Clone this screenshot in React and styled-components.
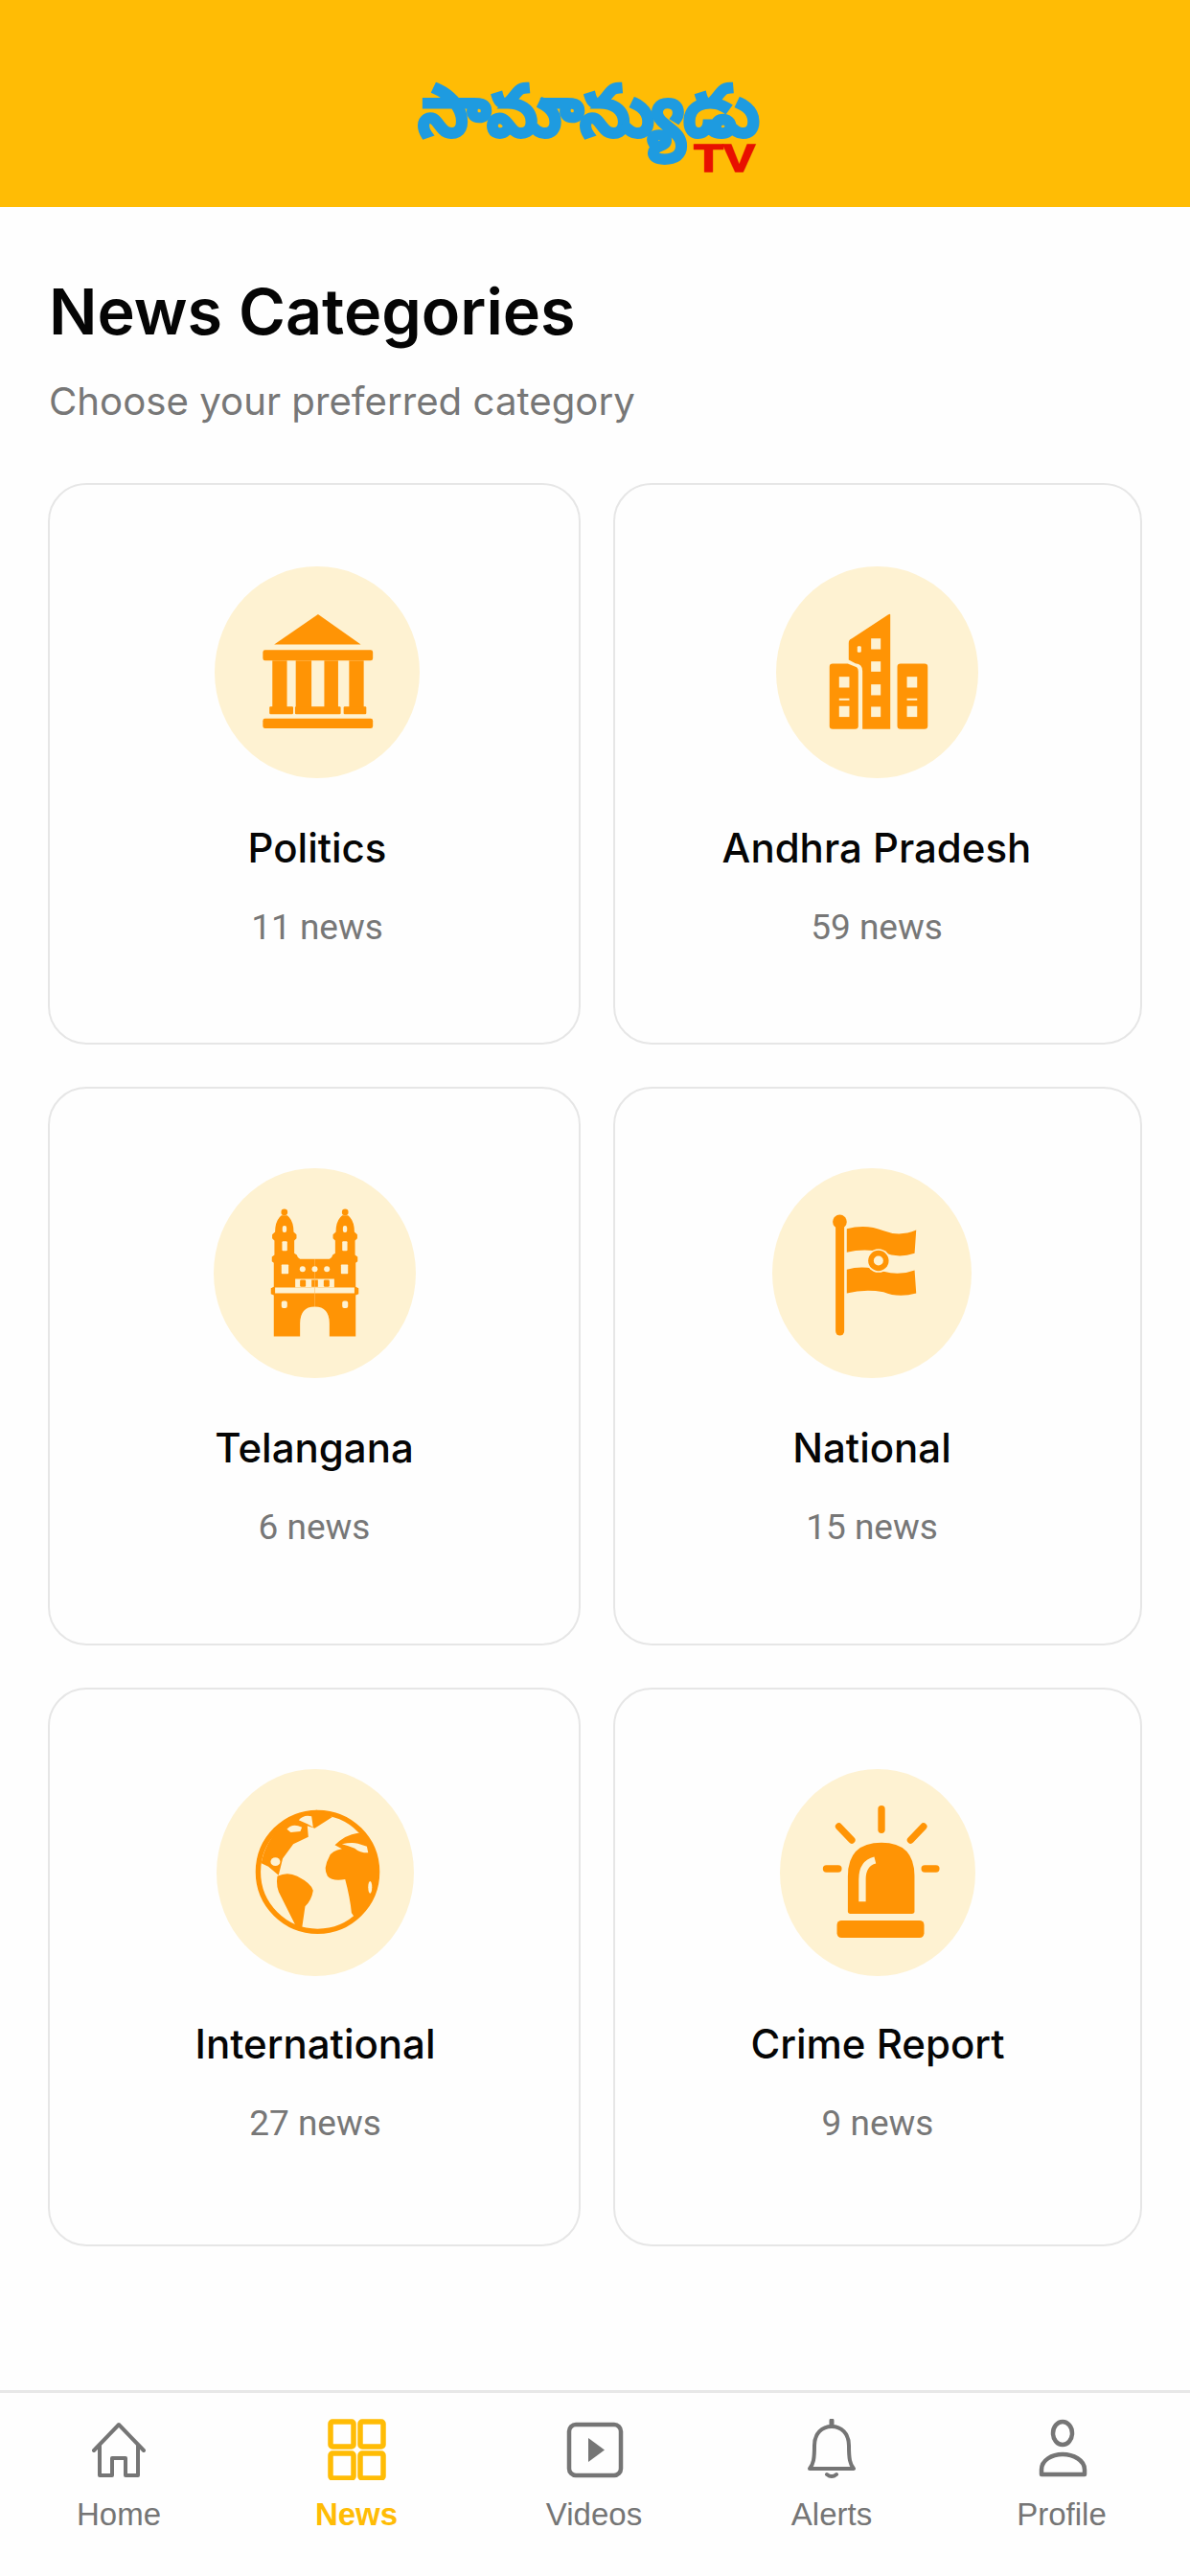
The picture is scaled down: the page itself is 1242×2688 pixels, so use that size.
import React from "react";
import styled, { createGlobalStyle } from "styled-components";

const ORANGE = "#ff9405";
const PALE = "#fef2d2";
const GREY = "#757575";

const GlobalStyle = createGlobalStyle`
  html, body {
    margin: 0;
    padding: 0;
    background: #fefefe;
  }
  * {
    box-sizing: border-box;
  }
`;

const Page = styled.div`
  width: 1242px;
  height: 2688px;
  display: flex;
  flex-direction: column;
  background: #fefefe;
  font-family: Inter, "Liberation Sans", sans-serif;
  overflow: hidden;
`;

const Header = styled.header`
  height: 216px;
  flex: none;
  display: flex;
  align-items: center;
  justify-content: center;
  background: #ffbc05;
`;

const Logo = styled.div`
  width: 354px;
  height: 102px;
  margin: 42px 14px 0 0;
  display: flex;
  flex-direction: column;
`;

const LogoWord = styled.span`
  height: 74px;
  font-family: "Noto Sans", "DejaVu Sans", sans-serif;
  font-size: 72px;
  line-height: 70px;
  font-weight: 700;
  white-space: nowrap;
  color: #1e9be0;
  -webkit-text-stroke: 4px #1e9be0;
`;

const LogoTv = styled.span`
  align-self: flex-end;
  margin-right: 3px;
  font-family: "Liberation Sans", sans-serif;
  font-size: 40px;
  line-height: 30px;
  font-weight: 700;
  color: #e81000;
  -webkit-text-stroke: 1.5px #e81000;
  transform: scaleX(1.25);
  transform-origin: right center;
`;

const Main = styled.main`
  flex: 1;
  padding: 64px 50px 0;
`;

const Title = styled.h1`
  margin: 0 0 0 1px;
  font-size: 66.5px;
  line-height: 90px;
  font-weight: 600;
  color: #050505;
`;

const Subtitle = styled.p`
  margin: 24px 0 0 1px;
  font-size: 40.2px;
  line-height: 50px;
  color: #777;
`;

const Grid = styled.div`
  margin-top: 60px;
  display: grid;
  grid-template-columns: 556px 552px;
  grid-template-rows: 586px 583px 583px;
  column-gap: 34px;
  row-gap: 44px;
`;

const Card = styled.article`
  border: 2.5px solid #e6e6e6;
  border-radius: 40px;
  padding: ${(props) => props.$top}px ${(props) => props.$right || 0}px 0 ${(props) => props.$left || 0}px;
  display: flex;
  flex-direction: column;
  align-items: center;
  background: #fefefe;
`;

const IconCircle = styled.div`
  width: ${(props) => props.$w}px;
  height: ${(props) => props.$h}px;
  border-radius: 50%;
  background: ${PALE};
  flex: none;

  svg {
    display: block;
    width: 100%;
    height: 100%;
  }
`;

const CardTitle = styled.h2`
  margin: ${(props) => props.$gap}px 0 0;
  font-size: 42px;
  line-height: 52px;
  font-weight: 500;
  color: #050505;
`;

const CardCount = styled.p`
  margin: 31px 0 0;
  font-family: Roboto, Inter, sans-serif;
  font-size: 37px;
  line-height: 52px;
  color: #777;
`;

const Nav = styled.nav`
  height: 194px;
  flex: none;
  border-top: 3px solid #e8e8e8;
  display: grid;
  grid-template-columns: 248px 248px 248px 248px 232px;
  padding-top: 27px;
  align-items: start;
`;

const NavItem = styled.div`
  display: flex;
  flex-direction: column;
  align-items: center;
  color: ${(props) => (props.$active ? "#ffbc05" : GREY)};

  svg {
    display: block;
    width: 64px;
    height: 64px;
  }
`;

const NavLabel = styled.span`
  margin-top: 16px;
  font-family: "Liberation Sans", sans-serif;
  font-size: 33px;
  line-height: 40px;
  font-weight: ${(props) => (props.$active ? 700 : 400)};
`;

const TempleIcon = () => (
  <svg viewBox="505 278 561 562" preserveAspectRatio="none">
    <g fill={ORANGE}>
      <path d="M788 405L905 485H668Z" />
      <rect x="637" y="500" width="301" height="28" rx="6" />
      <rect x="663" y="528" width="40" height="125" />
      <rect x="727" y="528" width="43" height="125" />
      <rect x="805" y="528" width="38" height="125" />
      <rect x="873" y="528" width="40" height="125" />
      <rect x="655" y="650" width="65" height="20" rx="3" />
      <rect x="725" y="650" width="125" height="20" rx="3" />
      <rect x="858" y="650" width="62" height="20" rx="3" />
      <rect x="637" y="682" width="301" height="26" rx="6" />
    </g>
  </svg>
);

const BuildingsIcon = () => (
  <svg viewBox="148 62 632 664" preserveAspectRatio="none">
    <g fill={ORANGE}>
      <path d="M325 367H372L400 378Q405 382 405 392V562Q405 572 395 572H325Q315 572 315 562V377Q315 367 325 367Z" />
      <path d="M505 213V572H418V390Q418 368 396 366L375 355V302Q375 292 385 288L498 214Q505 210 505 213Z" />
      <rect x="527" y="367" width="95" height="205" rx="10" />
    </g>
    <g fill={PALE}>
      <rect x="445" y="288" width="30" height="34" />
      <rect x="445" y="360" width="30" height="32" />
      <rect x="445" y="432" width="30" height="34" />
      <rect x="445" y="502" width="30" height="32" />
      <rect x="402" y="312" width="12" height="20" rx="4" />
      <rect x="345" y="408" width="32" height="34" />
      <rect x="345" y="476" width="32" height="6" />
      <rect x="345" y="500" width="32" height="34" />
      <rect x="557" y="408" width="32" height="34" />
      <rect x="557" y="476" width="32" height="6" />
      <rect x="557" y="500" width="32" height="34" />
    </g>
  </svg>
);

const CharminarHalf = () => (
  <>
    <path
      fill={ORANGE}
      d="M386 343H340Q332 340 330 330L322 325V285L329 278V266L320 258Q320 222 300 206L282 206Q262 222 262 258L253 266V278L260 285V330L252 336V350L258 355V430L249 434V452L258 456V585H340V545Q340 492 386 492Z"
    />
    <circle cx="291" cy="196" r="10" fill={ORANGE} />
    <g fill={PALE}>
      <rect x="285" y="238" width="13" height="21" rx="6" />
      <rect x="284" y="287" width="16" height="30" rx="3" />
      <rect x="282" y="360" width="22" height="29" rx="2" />
      <rect x="282" y="474" width="18" height="23" rx="6" />
      <circle cx="348" cy="374" r="9" />
      <rect x="262" y="432" width="124" height="18" />
      <rect x="325" y="405" width="61" height="27" />
    </g>
    <rect x="340" y="408" width="18" height="22" rx="4" fill={ORANGE} />
    <rect x="376" y="408" width="10" height="22" fill={ORANGE} />
  </>
);

const CharminarIcon = () => (
  <svg viewBox="70 58 632 658" preserveAspectRatio="none">
    <CharminarHalf />
    <g transform="matrix(-1 0 0 1 772 0)">
      <CharminarHalf />
    </g>
    <circle cx="386" cy="374" r="9" fill={PALE} />
  </svg>
);

const FlagIcon = () => (
  <svg viewBox="82 58 623 658" preserveAspectRatio="none">
    <g fill={ORANGE}>
      <rect x="280" y="230" width="27" height="352" rx="13" />
      <circle cx="293" cy="226" r="22" />
      <path d="M315 248Q375 232 430 254Q480 274 532 252L527 325Q475 342 430 322Q370 308 315 322Z" />
      <path d="M315 376Q370 360 430 382Q480 396 527 378L532 450Q475 465 430 446Q370 436 315 450Z" />
    </g>
    <circle cx="414" cy="348" r="37" fill={PALE} />
    <circle cx="414" cy="348" r="32" fill={ORANGE} />
    <circle cx="414" cy="348" r="15" fill={PALE} />
  </svg>
);

const GlobeIcon = () => (
  <svg viewBox="78 50 617 648" preserveAspectRatio="none">
    <circle cx="394" cy="372" r="186" fill="none" stroke={ORANGE} strokeWidth="16" />
    <g fill={ORANGE}>
      <path d="M218 345C232 262 300 188 392 178L440 200L385 235L362 228L365 262L318 285L285 330L272 382L240 355Z" />
      <path d="M268 385Q300 370 330 385Q375 408 380 430Q375 460 355 480L345 548L325 540Q305 500 280 450Q262 420 268 385Z" />
      <path d="M448 288Q480 255 520 250L545 255Q578 310 580 372Q575 445 510 515L500 500Q495 450 480 395Q440 402 425 385Q410 360 430 325Q438 305 470 300Z" />
    </g>
    <g fill={PALE}>
      <path d="M335 210Q350 192 375 198L380 232L362 222Z" />
      <path d="M298 238Q315 218 345 232L340 245L310 248Z" />
      <ellipse cx="262" cy="340" rx="15" ry="13" />
      <path d="M470 285Q500 278 520 283L548 292L552 312Q525 312 510 298Q490 290 470 285Z" />
      <ellipse cx="558" cy="420" rx="6" ry="19" />
    </g>
  </svg>
);

const SirenIcon = () => (
  <svg viewBox="68 50 610 648" preserveAspectRatio="none">
    <g stroke={ORANGE} strokeWidth="22" strokeLinecap="round">
      <path d="M385 175V240" />
      <path d="M252 230L292 272" />
      <path d="M516 230L476 272" />
      <path d="M213 362H250" />
      <path d="M520 362H555" />
    </g>
    <path
      fill={ORANGE}
      d="M280 495V385Q280 280 385 280Q488 280 488 385V495Q488 503 480 503H288Q280 503 280 495Z"
    />
    <path d="M325 465V395Q325 345 365 335" fill="none" stroke={PALE} strokeWidth="22" />
    <rect x="246" y="524" width="272" height="54" rx="14" fill={ORANGE} />
  </svg>
);

const HomeIcon = () => (
  <svg viewBox="0 0 64 64" fill="none" stroke="currentColor" strokeWidth="4" strokeLinejoin="round" strokeLinecap="round">
    <path d="M6 33L32 6L58 33" />
    <path d="M12 28V59H25V41H39V59H52V28" />
  </svg>
);

const GridIcon = () => (
  <svg viewBox="0 0 64 64" fill="none" stroke="currentColor" strokeWidth="5.5" strokeLinejoin="round">
    <rect x="5" y="3" width="24" height="26" rx="2" />
    <rect x="36" y="3" width="24" height="26" rx="2" />
    <rect x="5" y="36" width="24" height="26" rx="2" />
    <rect x="36" y="36" width="24" height="26" rx="2" />
  </svg>
);

const VideoIcon = () => (
  <svg viewBox="0 0 64 64" fill="none" stroke="currentColor" strokeWidth="4.5">
    <rect x="6" y="6" width="54" height="53" rx="7" />
    <path d="M26 20L43 32.5L26 45Z" fill="currentColor" stroke="none" />
  </svg>
);

const BellIcon = () => (
  <svg viewBox="0 0 64 64" fill="none" stroke="currentColor" strokeWidth="4" strokeLinejoin="round" strokeLinecap="round">
    <path d="M32 2V7" strokeWidth="5" />
    <path d="M9 52C13 47 14 42 14 28C14 15 22 8 32 8C42 8 50 15 50 28C50 42 51 47 55 52Z" />
    <path d="M27 58Q32 62 37 58" strokeWidth="4" fill="currentColor" />
  </svg>
);

const ProfileIcon = () => (
  <svg viewBox="0 0 64 64" fill="none" stroke="currentColor" strokeWidth="4.5">
    <ellipse cx="33" cy="15" rx="10" ry="12" />
    <path d="M11 58V53C11 43 22 37 33 37C44 37 56 43 56 53V58Z" strokeLinejoin="round" />
  </svg>
);

const categories = [
  { name: "Politics", count: 11, Icon: TempleIcon, w: 214, h: 221, top: 85, gap: 47, left: 6 },
  { name: "Andhra Pradesh", count: 59, Icon: BuildingsIcon, w: 211, h: 221, top: 85, gap: 47, right: 2 },
  { name: "Telangana", count: 6, Icon: CharminarIcon, w: 211, h: 219, top: 83, gap: 47 },
  { name: "National", count: 15, Icon: FlagIcon, w: 208, h: 219, top: 83, gap: 47, right: 12 },
  { name: "International", count: 27, Icon: GlobeIcon, w: 206, h: 216, top: 83, gap: 45, left: 2 },
  { name: "Crime Report", count: 9, Icon: SirenIcon, w: 204, h: 216, top: 83, gap: 45 },
];

const navItems = [
  { label: "Home", Icon: HomeIcon },
  { label: "News", Icon: GridIcon, active: true },
  { label: "Videos", Icon: VideoIcon },
  { label: "Alerts", Icon: BellIcon },
  { label: "Profile", Icon: ProfileIcon },
];

export default function App() {
  return (
    <Page>
      <GlobalStyle />
      <Header>
        <Logo>
          <LogoWord>సామాన్యుడు</LogoWord>
          <LogoTv>TV</LogoTv>
        </Logo>
      </Header>
      <Main>
        <Title>News Categories</Title>
        <Subtitle>Choose your preferred category</Subtitle>
        <Grid>
          {categories.map(({ name, count, Icon, w, h, top, gap, left, right }) => (
            <Card key={name} $top={top} $left={left} $right={right}>
              <IconCircle $w={w} $h={h}>
                <Icon />
              </IconCircle>
              <CardTitle $gap={gap}>{name}</CardTitle>
              <CardCount>{count} news</CardCount>
            </Card>
          ))}
        </Grid>
      </Main>
      <Nav>
        {navItems.map(({ label, Icon, active }) => (
          <NavItem key={label} $active={active}>
            <Icon />
            <NavLabel $active={active}>{label}</NavLabel>
          </NavItem>
        ))}
      </Nav>
    </Page>
  );
}
